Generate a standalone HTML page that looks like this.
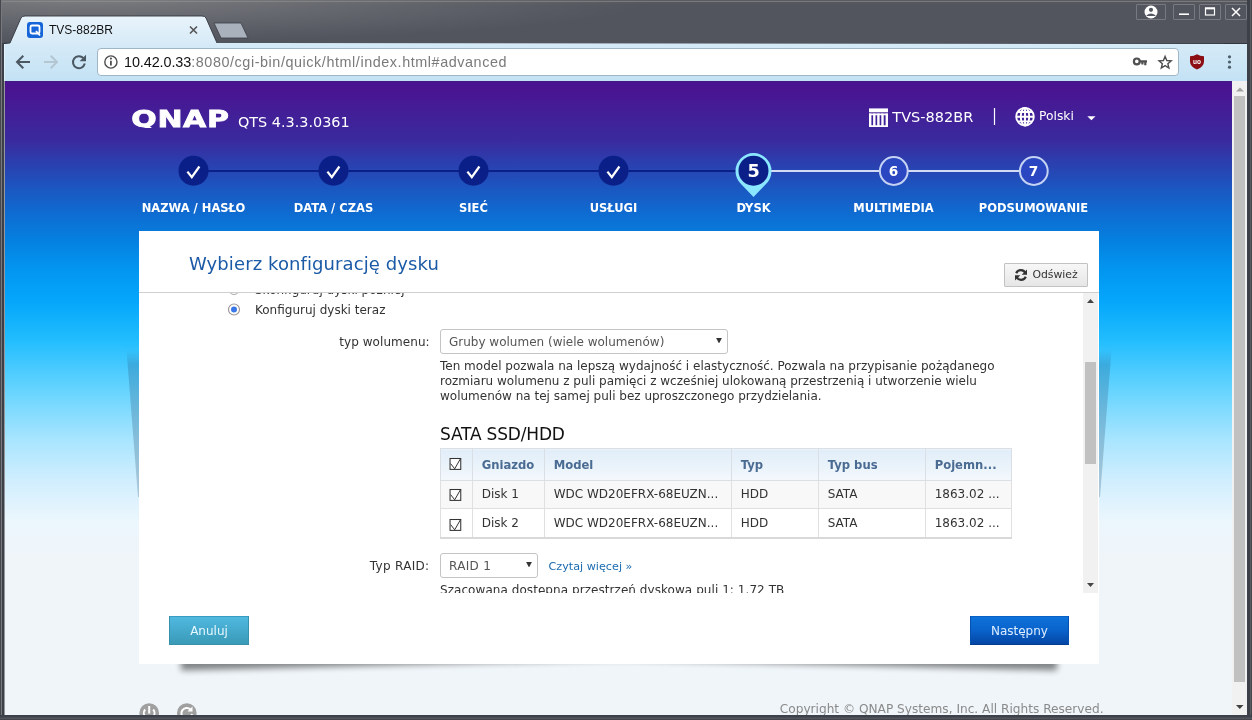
<!DOCTYPE html>
<html lang="pl">
<head>
<meta charset="utf-8">
<title>TVS-882BR</title>
<style>
*{box-sizing:border-box;margin:0;padding:0}
html,body{width:1252px;height:720px;overflow:hidden;background:#4e5159}
body{position:relative;font-family:"DejaVu Sans","Liberation Sans",sans-serif;font-size:13px;color:#333}
.abs{position:absolute}
/* ---------- window frame ---------- */
#frame{will-change:transform;position:absolute;left:0;top:0;width:1252px;height:720px;background:#3f434b}
#titlebar{position:absolute;left:0;top:0;width:1252px;height:44px;background:radial-gradient(ellipse 560px 42px at 90px 0,rgba(150,152,152,.55),rgba(150,152,152,0)),linear-gradient(#5a5c60 0,#5a5c60 1px,#76797d 1px,#76797d 2px,#56585c 2px,#52545e 6px,#52545e 42.600px,#34363f 42.600px,#34363f 44px)}
#frame-l{position:absolute;left:0;top:0;width:5px;height:720px;background:linear-gradient(90deg,#46484e 0,#46484e 1px,#78797e 1px,#78797e 2px,rgba(0,0,0,0) 2px)}
#frame-l2{position:absolute;left:2px;top:43px;width:2px;height:677px;background:#3b4049}
#frame-r{position:absolute;left:1247px;top:0;width:5px;height:720px;background:linear-gradient(90deg,rgba(59,64,73,0) .5px,#3b4049 .5px,#3b4049 3px,#5a5c62 3px,#5a5c62 4px,#44464c 4px)}
#frame-b{position:absolute;left:0;top:715px;width:1252px;height:5px;background:linear-gradient(#3b4049 0,#3f434b 2px,#53565e 3px,#53565e 4px,#44464c 4px)}
#edge-l{position:absolute;left:4px;top:44px;width:1px;height:671px;background:rgba(255,255,255,.45)}
#toolbar{position:absolute;left:4px;top:43.5px;width:1243.5px;height:37.5px;background:linear-gradient(#d6eaf7,#c3e2f5)}
#urlbar{position:absolute;left:96.600px;top:48px;width:1082.200px;height:28px;background:#fff;border:1px solid #9fb6c6;border-radius:4px}
#url{position:absolute;left:124px;top:53px;font-family:"Liberation Sans","DejaVu Sans",sans-serif;font-size:14.4px;line-height:18px;color:#7a7a7a;white-space:nowrap;letter-spacing:.1px}
#url b{font-weight:normal;color:#111;letter-spacing:-.08px}
#tabtitle{position:absolute;left:49px;top:21.5px;font-family:"Liberation Sans","DejaVu Sans",sans-serif;font-size:12px;line-height:16px;color:#111;white-space:nowrap}
.wbtn{position:absolute;top:4px;height:16px;border:1px solid #777a81;border-radius:1px}
/* ---------- page ---------- */
#viewport{position:absolute;left:5px;top:81px;width:1242.5px;height:634px;overflow:hidden;background:#f0f5f9}
#page{will-change:transform;position:absolute;left:0;top:0;width:1227px;height:634px;overflow:hidden;
background:linear-gradient(#3e1c80 0,#4a1491 1.5px,#4a1491 8px,#3a2a9e 59px,#2a41b0 84px,#1a58c2 109px,#0e6dd2 134px,#0580e0 159px,#0396f0 189px,#04a6fb 219px,#22bdfe 259px,#66d4fe 309px,#a8e5fe 359px,#d0eefe 399px,#ebf6fd 439px,#f0f5f9 480px,#f0f5f9 634px)}
#pscroll{position:absolute;left:1227px;top:0;width:15.5px;height:634px;background:#f1f1f1}
#pscroll i{position:absolute;left:2px;top:15px;width:11.200px;height:586px;background:#c1c1c1}
/* coordinates inside #page are screen coords minus (5,81) */
.w{color:#fff}
#ver{position:absolute;left:233px;top:32px;font-size:14.4px;line-height:18px;color:#fff;white-space:nowrap}
#logo{overflow:hidden;height:24.400px;padding:0 1px;margin-left:-1.270px;position:absolute;left:126px;top:23px;font-weight:bold;font-size:23.500px;line-height:30px;color:#fff;white-space:nowrap;transform-origin:0 50%;transform:scaleX(1.275);letter-spacing:.5px;-webkit-text-stroke:.8px #fff}
#model{position:absolute;left:887.300px;top:27px;font-size:14.5px;line-height:18px;color:#fff;white-space:nowrap}
#lang{position:absolute;left:1034px;top:27px;font-size:12.300px;line-height:16px;color:#fff;white-space:nowrap}
.step{position:absolute;top:120.4px;width:140px;text-align:center;font-weight:bold;font-size:11.500px;line-height:14px;color:#fff;white-space:nowrap;text-transform:uppercase}
/* dialog */
#dlg{will-change:transform;position:absolute;left:134px;top:150px;width:960px;height:433px;background:#fff}
#dlg h1{position:absolute;left:50px;top:21px;font-weight:normal;font-size:18px;line-height:24px;color:#1b5aa6;white-space:nowrap;letter-spacing:.1px}
#hline{position:absolute;left:0;top:61px;width:960px;height:1px;background:#cfcfcf}
#refresh{position:absolute;left:865px;top:32px;width:84px;height:24px;border:1px solid #c2c2c2;border-radius:1px;background:linear-gradient(#f7f7f7,#e6e6e6);font-size:10.850px;line-height:21px;color:#333;padding-left:27.400px;white-space:nowrap}
#scrollarea{position:absolute;left:0;top:62px;width:960px;height:300px;overflow:hidden}
#sb{position:absolute;left:944px;top:0;width:15px;height:300px;background:#f1f1f1}
#sb i{position:absolute;left:2px;top:68.700px;width:11px;height:102.600px;background:#c1c1c1}
.t13{position:absolute;margin-top:1px;font-size:12px;line-height:15px;white-space:nowrap;color:#333}
.sel{position:absolute;height:25px;padding-top:1px;border:1px solid #c4c4c4;border-radius:3px;background:#fff;font-size:12px;line-height:22px;color:#555;padding-left:8px;white-space:nowrap}
.sel:after{content:"";position:absolute;right:5px;top:7.700px;width:6px;height:5.700px;background:#333;clip-path:polygon(0 0,100% 0,50% 100%)}
table{position:absolute;left:301px;top:155px;border-collapse:collapse;table-layout:fixed;width:571px;font-size:12px}
th,td{border:1px solid #e0e0e0;padding:0 0 0 8.700px;text-align:left;white-space:nowrap;overflow:hidden;font-weight:normal;color:#333}
th{height:32px;background:linear-gradient(#e0edf8,#f3f8fc);color:#4a6b92;font-weight:bold;font-size:11.600px;border-color:#d9dfe5}
td{height:28px}
tr.last td{height:29px;border-bottom:2px solid #d9d9d9}
tr.odd td{background:#f8f8f8;padding-bottom:1px}
.cbx{position:absolute;left:309.500px;width:14px;height:14px}
.btn{position:absolute;top:385px;height:29px;font-size:12px;line-height:28px;text-align:center;color:#fff}
#cancel{left:30px;width:80px;background:linear-gradient(#50b8df,#45a9cc 50%,#3a9ab6);border:1px solid #3791ad;border-top-color:#3a9cc0;color:#e6f8ff}
#next{left:830.600px;width:99.700px;background:linear-gradient(#0d73da,#0a62cb 50%,#0346a4);border:1px solid #0551ad;border-top-color:#0a62c4;border-bottom-color:#033c92;color:#dceeff}
#copy{position:absolute;left:774.800px;top:620px;font-size:12.150px;line-height:16px;color:#8a8a8a;white-space:nowrap}
</style>
</head>
<body>
<div id="frame">
  <div id="titlebar"></div>
  
  <!-- tab strip -->
  <svg class="abs" style="left:0;top:0" width="1252" height="45" viewBox="0 0 1252 45">
    <defs>
      <linearGradient id="tg" x1="0" y1="0" x2="0" y2="1"><stop offset="0" stop-color="#e9f4fb"/><stop offset="1" stop-color="#d6eaf7"/></linearGradient>
    </defs>
    <path d="M5 45 L5 44 L10 43 L21 18 Q22 16 25 16 L202 16 Q205 16 206 18 L217 43 L1248 44 L1248 45 Z" fill="url(#tg)"/>
    <path d="M214 23 L241 23 L248 38 L221 38 Z" fill="#a9b2bc" stroke="#3a3d46" stroke-width=".8"/>
    <path d="M4 43.200 L10 43 L21 18 Q22 16 25 16 L202 16 Q205 16 206 18 L217 43" fill="none" stroke="#33353e" stroke-width=".9"/>
    <!-- favicon -->
    <rect x="27" y="22" width="16" height="16" rx="3" fill="#1565d8"/>
    <rect x="30.5" y="25.5" width="9" height="8" rx="1.5" fill="none" stroke="#fff" stroke-width="1.8"/>
    <path d="M36 31 L40 35.5" stroke="#fff" stroke-width="1.8"/>
    <!-- tab close -->
    <path d="M190 26.5 L197 33.5 M197 26.5 L190 33.5" stroke="#555" stroke-width="1.6"/>
  </svg>
  <div id="tabtitle">TVS-882BR</div>
  <!-- window buttons -->
  <div class="wbtn" style="left:1136px;width:30px"></div>
  <div class="wbtn" style="left:1173px;width:22px"></div>
  <div class="wbtn" style="left:1199px;width:22px"></div>
  <div class="wbtn" style="left:1225px;width:22px"></div>
  <svg class="abs" style="left:1130px;top:0" width="122" height="24" viewBox="1130 0 122 24">
    <circle cx="1151" cy="12" r="6.5" fill="#fff"/>
    <circle cx="1151" cy="9.8" r="2.1" fill="#555861"/>
    <path d="M1146.6 15.2 Q1151 11.8 1155.4 15.2 L1155.4 16 L1146.6 16 Z" fill="#555861"/>
    <path d="M1179 14.2 H1189" stroke="#fff" stroke-width="1.6"/>
    <rect x="1205.5" y="8.2" width="9" height="6.8" fill="none" stroke="#fff" stroke-width="1.2"/>
    <path d="M1205 8.4 H1215" stroke="#fff" stroke-width="2"/>
    <path d="M1232 8 L1240 16 M1240 8 L1232 16" stroke="#fff" stroke-width="1.5"/>
  </svg>
  <div id="toolbar"></div>
  <div id="urlbar"></div>
  <div id="url"><b>10.42.0.33</b><span style="letter-spacing:.56px">:8080/cgi-bin/quick/html/index.html#advanced</span></div>
  <svg class="abs" style="left:5px;top:44px" width="1243" height="37" viewBox="5 44 1243 37">
    <!-- back -->
    <path d="M30 62 H17.500 M23.300 55.700 L17 62 L23.300 68.300" fill="none" stroke="#4b5861" stroke-width="2"/>
    <!-- forward -->
    <path d="M44 62 H56.500 M50.700 55.700 L57 62 L50.700 68.300" fill="none" stroke="#b3c6d2" stroke-width="2"/>
    <!-- reload -->
    <path d="M83.300 58 A6 6 0 1 0 84.800 63.600" fill="none" stroke="#4b5861" stroke-width="2"/>
    <path d="M86 54.800 V61.200 H79.600 Z" fill="#4b5861"/>
    <!-- info -->
    <circle cx="110.900" cy="62" r="6.100" fill="none" stroke="#4f4f4f" stroke-width="1.400"/>
    <path d="M110.900 60.800 V65.600" stroke="#4f4f4f" stroke-width="1.800"/>
    <circle cx="110.900" cy="58.600" r="1.100" fill="#4f4f4f"/>
    <!-- key -->
    <circle cx="1136.800" cy="61.400" r="2.900" fill="none" stroke="#4f4f4f" stroke-width="2.200"/>
    <path d="M1139.800 61.400 H1147 M1145.300 61.400 V65.200 M1142.400 61.400 V64.400" stroke="#4f4f4f" stroke-width="2.200" fill="none"/>
    <!-- star -->
    <path d="M1165.100 56.400 L1166.800 60.500 L1171.200 60.850 L1167.850 63.700 L1168.900 68 L1165.100 65.650 L1161.300 68 L1162.350 63.700 L1159 60.850 L1163.400 60.500 Z" fill="none" stroke="#4f4f4f" stroke-width="1.400" stroke-linejoin="miter"/>
    <!-- ublock -->
    <path d="M1197 54.200 Q1200 56.300 1204 56.300 V61.500 Q1204 66.500 1197 69.600 Q1190 66.500 1190 61.500 V56.300 Q1194 56.300 1197 54.200 Z" fill="#8a0e12"/>
    <text x="1197" y="64.200" font-family="Liberation Sans, sans-serif" font-weight="bold" font-size="6.500" fill="#fff" text-anchor="middle">uo</text>
    <!-- menu dots -->
    <circle cx="1229.500" cy="56.800" r="1.600" fill="#4c5f6b"/>
    <circle cx="1229.500" cy="62" r="1.600" fill="#4c5f6b"/>
    <circle cx="1229.500" cy="67.200" r="1.600" fill="#4c5f6b"/>
  </svg>
</div>

<div id="viewport">
 <div id="page">
  <div id="logo">QNAP</div>
  <div id="ver">QTS 4.3.3.0361</div>
  <div id="model">TVS-882BR</div>
  <div id="lang">Polski</div>
  <!-- header icons + stepper -->
  <svg class="abs" style="left:0;top:0" width="1227" height="150" viewBox="5 81 1227 150">
    <!-- NAS icon -->
    <path d="M869 108.400 H888 V112.300 H869 Z" fill="#fff"/>
    <path d="M870.200 113.600 V127 M874.300 113.600 V127 M878.400 113.600 V127 M882.500 113.600 V127 M886.800 113.600 V127" stroke="#fff" stroke-width="2.400"/>
    <path d="M869 114.400 H888 M869 126.100 H888" stroke="#fff" stroke-width="1.800"/>
    <path d="M994.500 108 V125" stroke="#fff" stroke-width="1.200"/>
    <!-- globe -->
    <g fill="none" stroke="#fff" stroke-width="1.900">
      <circle cx="1025" cy="116.700" r="8.800"/>
      <ellipse cx="1025" cy="116.700" rx="4.200" ry="8.800"/>
      <path d="M1025 108 V125.500 M1016.200 116.700 H1033.800 M1017.800 112 H1032.200 M1017.800 121.400 H1032.200"/>
    </g>
    <path d="M1087.300 116.300 H1095.500 L1091.400 120.300 Z" fill="#fff"/>
    <!-- lines -->
    <path d="M193.500 171 H753.500" stroke="#0a2088" stroke-width="2"/>
    <path d="M753.500 171 H1033.500" stroke="#d3dbf6" stroke-width="2"/>
    <!-- done steps -->
    <g fill="#0a2088">
      <circle cx="193.500" cy="170.700" r="15"/><circle cx="333.500" cy="170.700" r="15"/><circle cx="473.500" cy="170.700" r="15"/><circle cx="613.500" cy="170.700" r="15"/>
    </g>
    <g fill="none" stroke="#fff" stroke-width="2.200">
      <path d="M187.400 171.600 L191.800 177.200 L199.400 166.500"/>
      <path d="M327.400 171.600 L331.800 177.200 L339.400 166.500"/>
      <path d="M467.400 171.600 L471.800 177.200 L479.400 166.500"/>
      <path d="M607.400 171.600 L611.800 177.200 L619.400 166.500"/>
    </g>
    <!-- current step pin -->
    <path d="M753.500 197 L741 184 A18 18 0 1 1 766 184 Z" fill="#8be6ff"/>
    <circle cx="753.500" cy="170.700" r="15" fill="#0a2088"/>
    <text x="753.700" y="177.100" font-family="DejaVu Sans, sans-serif" font-weight="bold" font-size="17.700" fill="#fff" text-anchor="middle">5</text>
    <!-- pending -->
    <circle cx="893.800" cy="171" r="13.900" fill="#2a46c0" stroke="#c4d2f3" stroke-width="2"/>
    <circle cx="1033.800" cy="171" r="13.900" fill="#2a46c0" stroke="#c4d2f3" stroke-width="2"/>
    <text x="893.600" y="175.900" font-family="DejaVu Sans, sans-serif" font-weight="bold" font-size="13.700" fill="#fff" text-anchor="middle">6</text>
    <text x="1033.600" y="175.900" font-family="DejaVu Sans, sans-serif" font-weight="bold" font-size="13.700" fill="#fff" text-anchor="middle">7</text>
  </svg>
  <div class="step" style="left:118.500px">NAZWA / HASŁO</div>
  <div class="step" style="left:258.500px">DATA / CZAS</div>
  <div class="step" style="left:398.500px">SIEĆ</div>
  <div class="step" style="left:538.500px">USŁUGI</div>
  <div class="step" style="left:678.500px">DYSK</div>
  <div class="step" style="left:818.500px">MULTIMEDIA</div>
  <div class="step" style="left:958.500px">PODSUMOWANIE</div>

  <!-- side wedges + bottom shadow -->
  <svg class="abs" style="left:0;top:0" width="1227" height="633" viewBox="5 81 1227 633">
    <defs>
      <linearGradient id="wg" x1="0" y1="0" x2="0" y2="1"><stop offset="0" stop-color="#2a6a98" stop-opacity="0"/><stop offset=".1" stop-color="#2a6a98" stop-opacity=".32"/><stop offset="1" stop-color="#7f9fb4" stop-opacity=".5"/></linearGradient>
      <filter id="bl" x="-10%" y="-200%" width="120%" height="500%"><feGaussianBlur stdDeviation="3.200"/></filter>
    </defs>
    <path d="M126.500 350 L139 350 L139 497 L138 497 Z" fill="url(#wg)"/>
    <path d="M1111.500 350 L1099 350 L1099 497 L1100 497 Z" fill="url(#wg)"/>
    <g filter="url(#bl)" fill="#000" opacity=".46"><path d="M181 655 H619 V659.500 L181 670.500 Z"/><path d="M1057 655 H619 V659.500 L1057 670.500 Z"/></g>
  </svg>

  <div id="dlg">
    <h1>Wybierz konfigurację dysku</h1>
    <div id="refresh">Odśwież
      <svg class="abs" style="left:9px;top:4px" width="14" height="14" viewBox="0 0 14 14"><path d="M11.500 5.500 A5 5 0 0 0 2.200 5.200" fill="none" stroke="#333" stroke-width="2.200"/><path d="M13 1.500 V6.800 H7.700 Z" fill="#333"/><path d="M2.500 8.500 A5 5 0 0 0 11.800 8.800" fill="none" stroke="#333" stroke-width="2.200"/><path d="M1 12.500 V7.200 H6.300 Z" fill="#333"/></svg>
    </div>
    <div id="hline"></div>
    <div id="scrollarea">
      <div class="t13" style="left:116px;top:-11px">Skonfiguruj dyski później</div>
      <svg class="abs" style="left:87px;top:-8px" width="16" height="40" viewBox="0 0 16 40">
        <circle cx="8" cy="4" r="5.500" fill="#fff" stroke="#a8a8a8" stroke-width="1"/>
        <circle cx="8" cy="24.500" r="5.500" fill="#fff" stroke="#a09a9a" stroke-width="1.200"/>
        <circle cx="8" cy="24.500" r="3" fill="#3b78e7"/>
      </svg>
      <div class="t13" style="left:116px;top:9px">Konfiguruj dyski teraz</div>
      <div class="t13" style="left:0;width:290.700px;text-align:right;top:41px;letter-spacing:.06px">typ wolumenu:</div>
      <div class="sel" style="left:301px;top:36px;width:288px">Gruby wolumen (wiele wolumenów)</div>
      <div class="t13" style="left:301px;top:65px">Ten model pozwala na lepszą wydajność i elastyczność. Pozwala na przypisanie pożądanego<br>rozmiaru wolumenu z puli pamięci z wcześniej ulokowaną przestrzenią i utworzenie wielu<br>wolumenów na tej samej puli bez uproszczonego przydzielania.</div>
      <div class="abs" style="left:301px;top:131px;font-size:17px;line-height:20px;letter-spacing:-.18px;color:#111;white-space:nowrap">SATA SSD/HDD</div>
      <table>
        <colgroup><col style="width:32px"><col style="width:72px"><col style="width:187px"><col style="width:87px"><col style="width:107px"><col style="width:86px"></colgroup>
        <tr><th></th><th>Gniazdo</th><th>Model</th><th>Typ</th><th>Typ bus</th><th>Pojemn...</th></tr>
        <tr class="odd"><td></td><td>Disk 1</td><td>WDC WD20EFRX-68EUZN...</td><td>HDD</td><td>SATA</td><td>1863.02 ...</td></tr>
        <tr class="last"><td></td><td>Disk 2</td><td>WDC WD20EFRX-68EUZN...</td><td>HDD</td><td>SATA</td><td>1863.02 ...</td></tr>
      </table>
      <svg class="cbx" style="top:164px" viewBox="0 0 14 14"><rect x="1.050" y="1.500" width="10.700" height="10.900" fill="#fff" stroke="#333" stroke-width="1.050"/><path d="M1.600 6.600 L5.700 11.800 L11.700 1.300" fill="none" stroke="#333" stroke-width="1"/></svg><svg class="cbx" style="top:195.100px" viewBox="0 0 14 14"><rect x="1.050" y="1.500" width="10.700" height="10.900" fill="#fff" stroke="#333" stroke-width="1.050"/><path d="M1.600 6.600 L5.700 11.800 L11.700 1.300" fill="none" stroke="#333" stroke-width="1"/></svg><svg class="cbx" style="top:224.500px" viewBox="0 0 14 14"><rect x="1.050" y="1.500" width="10.700" height="10.900" fill="#fff" stroke="#333" stroke-width="1.050"/><path d="M1.600 6.600 L5.700 11.800 L11.700 1.300" fill="none" stroke="#333" stroke-width="1"/></svg>
      <div class="t13" style="left:0;width:290.400px;text-align:right;top:265px;letter-spacing:.3px">Typ RAID:</div>
      <div class="sel" style="left:301px;top:260px;width:98px;letter-spacing:.3px">RAID 1</div>
      <div class="abs" style="left:409.500px;top:265.500px;font-size:11.200px;line-height:15px;color:#1c6cb0;white-space:nowrap">Czytaj więcej »</div>
      <div class="t13" style="left:301px;top:289px;letter-spacing:.06px">Szacowana dostępna przestrzeń dyskowa puli 1: 1.72 TB</div>
      <div id="sb"><i></i>
        <svg class="abs" style="left:0;top:0" width="16" height="300" viewBox="0 0 16 300"><path d="M4 10 H11 L7.500 6 Z M4 290 H11 L7.500 294 Z" fill="#444"/></svg>
      </div>
    </div>
    <div class="btn" id="cancel">Anuluj</div>
    <div class="btn" id="next">Następny</div>
  </div>

  <!-- footer -->
  <svg class="abs" style="left:130px;top:618px" width="70" height="16" viewBox="135 699 70 16">
    <circle cx="149.200" cy="713" r="9.800" fill="#a0a0a0"/>
    <path d="M145.200 709.500 A5.300 5.300 0 1 0 153.200 709.500" fill="none" stroke="#fff" stroke-width="2"/>
    <path d="M149.200 706 V713.500" stroke="#fff" stroke-width="2"/>
    <circle cx="186.800" cy="713" r="9.800" fill="#a0a0a0"/>
    <path d="M190.500 709.500 A5.300 5.300 0 1 0 192 714" fill="none" stroke="#fff" stroke-width="2"/>
    <path d="M192.500 706.500 V711.500 H187.500 Z" fill="#fff"/>
  </svg>
  <div id="copy">Copyright © QNAP Systems, Inc. All Rights Reserved.</div>
 </div>
 <div id="pscroll"><i></i>
   <svg class="abs" style="left:0;top:0" width="16" height="633" viewBox="0 0 16 633"><path d="M4 10.500 H12 L8 6.500 Z" fill="#a3a3a3"/><path d="M4 624 H11.500 L7.750 628 Z" fill="#404040"/></svg>
 </div>
</div>
<div id="frame-l"></div><div id="frame-l2"></div><div id="frame-r"></div><div id="frame-b"></div><div id="edge-l"></div>
</body>
</html>
